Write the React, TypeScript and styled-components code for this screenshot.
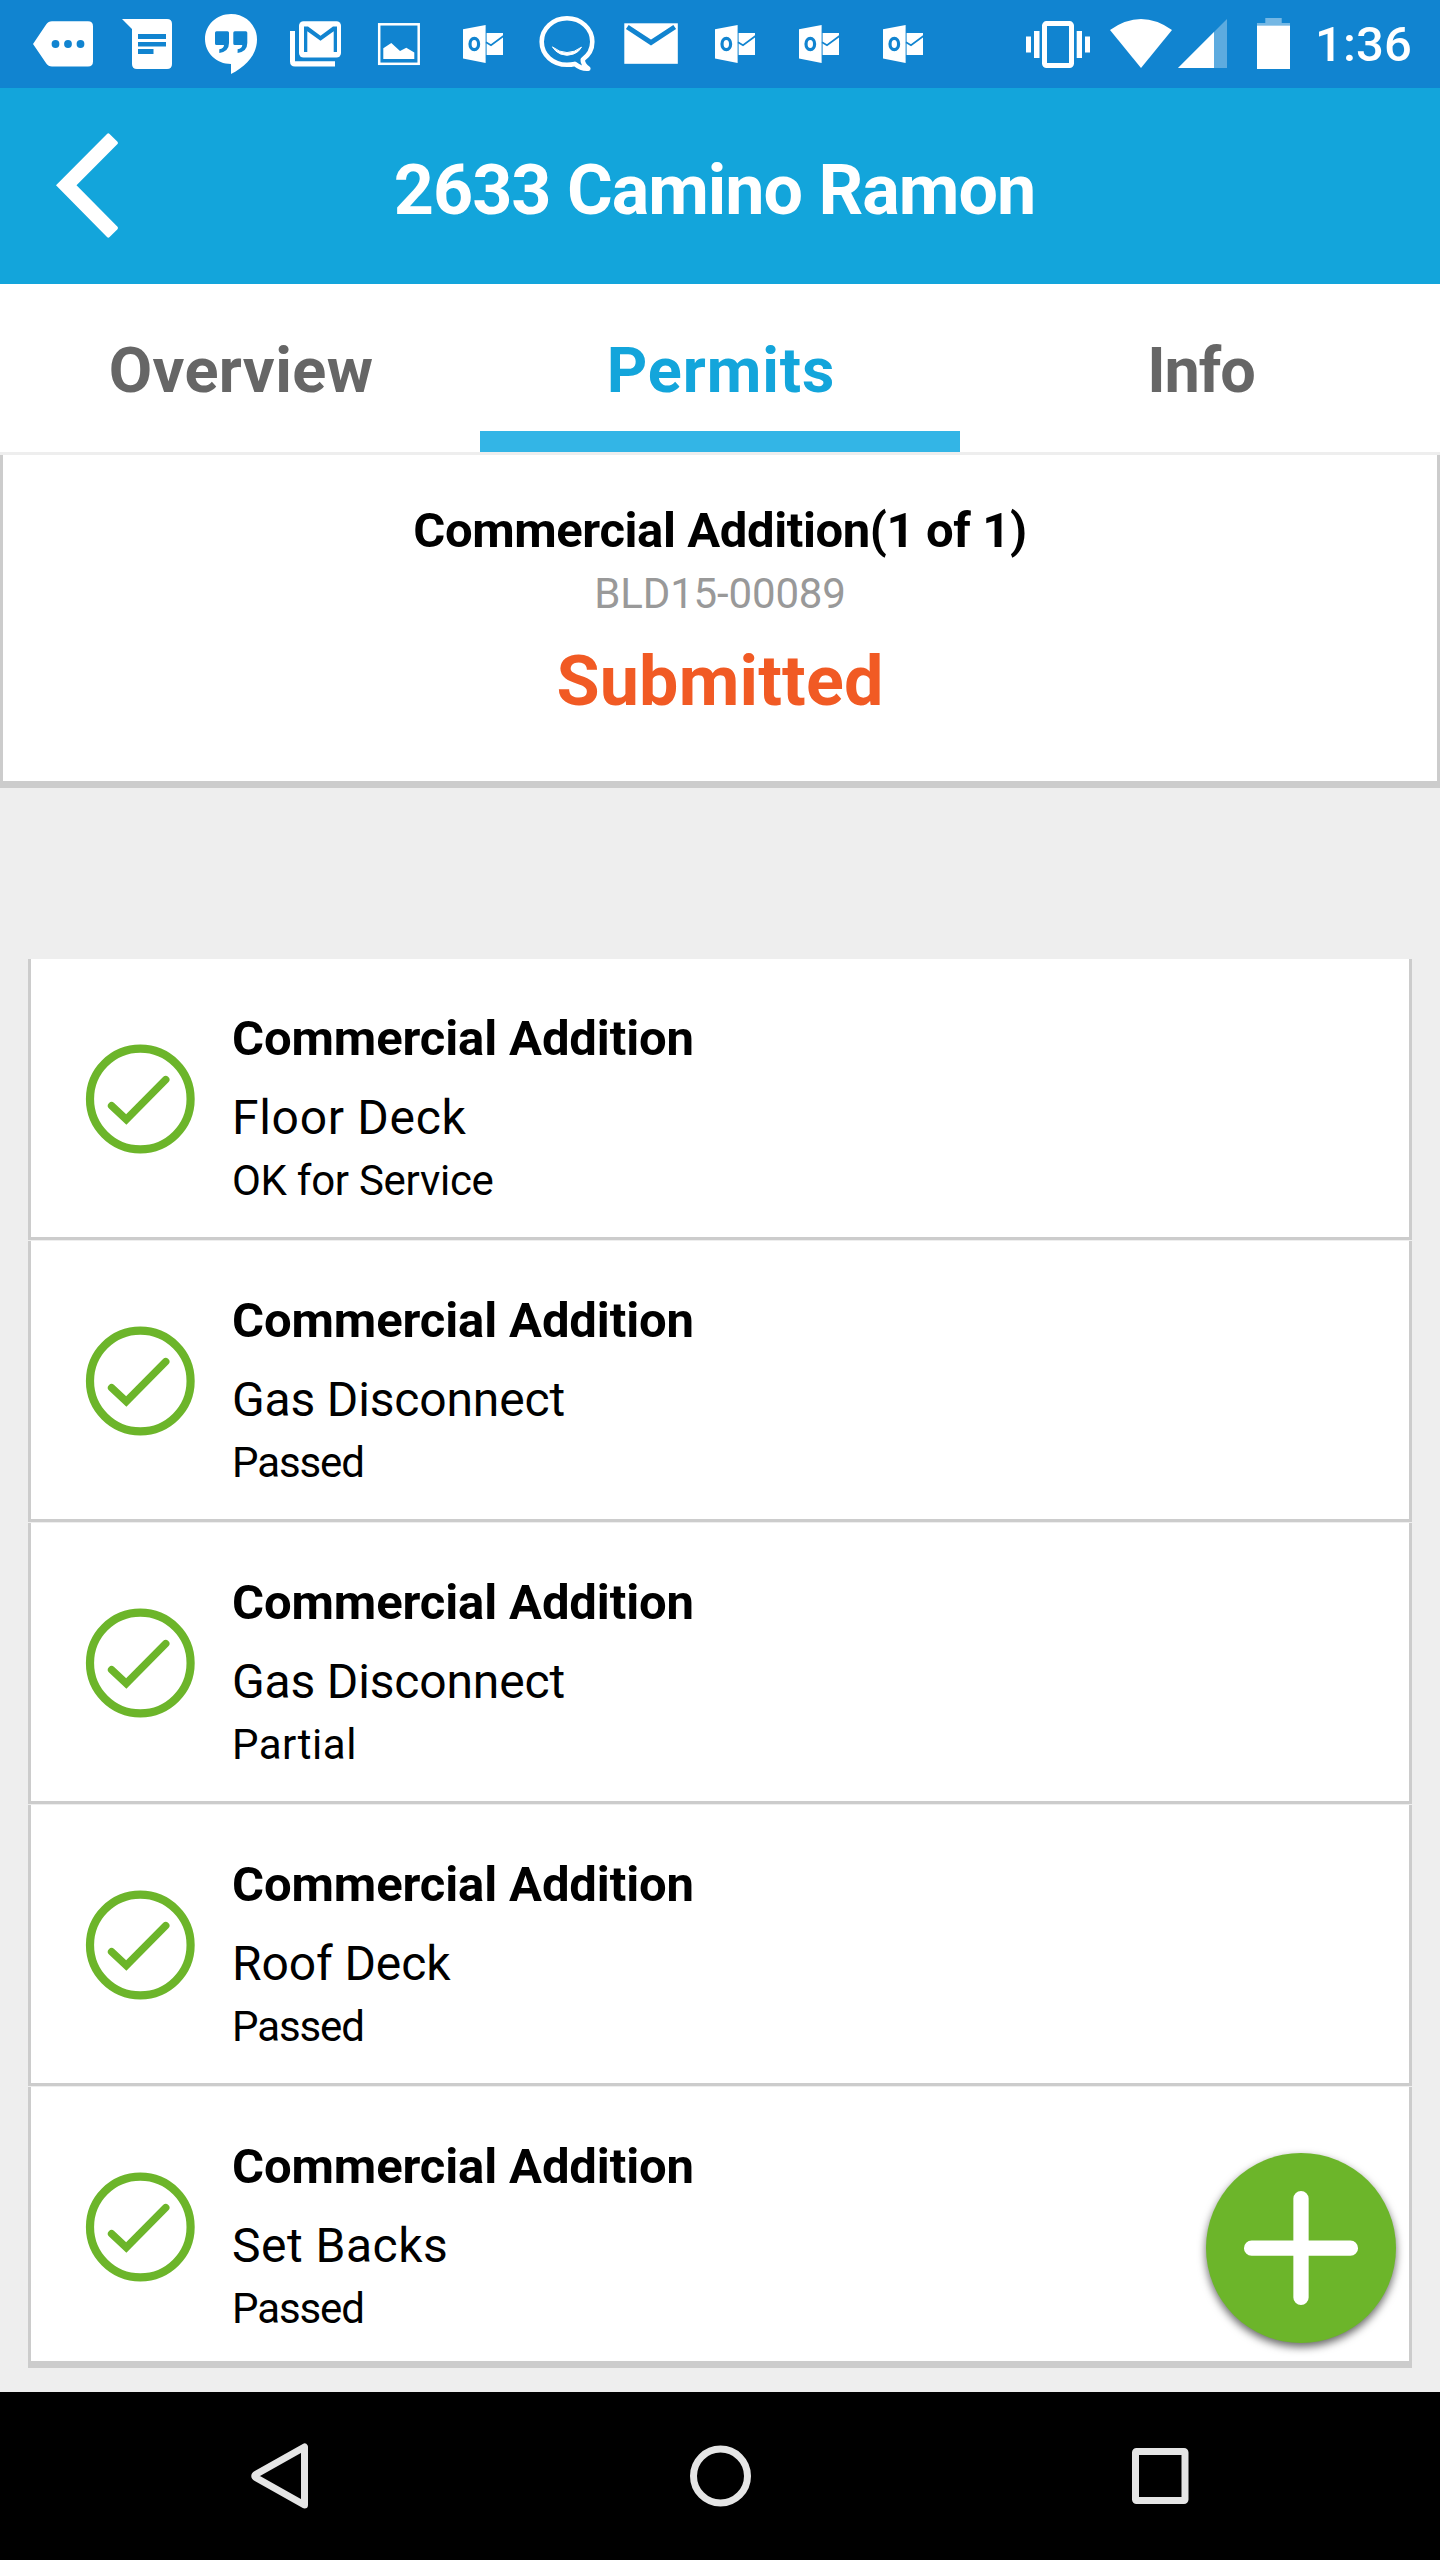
import React from 'react';
import styled, { createGlobalStyle } from 'styled-components';

const GlobalStyle = createGlobalStyle`
  * { box-sizing: border-box; }
  body { margin: 0; background: #eee; font-family: Roboto, "Liberation Sans", sans-serif; }
`;

const Screen = styled.div`
  width: 1440px;
  height: 2560px;
  display: flex;
  flex-direction: column;
  background: #eee;
  overflow: hidden;
`;

const StatusBar = styled.div`
  height: 88px;
  flex: none;
  display: flex;
  justify-content: space-between;
  padding: 0 25px 0 21px;
  background: #1184d0;
`;

const IconGroup = styled.div`
  display: flex;
  align-items: center;
`;

const StatusSvg = styled.svg`
  display: block;
  height: 88px;
  flex: none;
`;

const Clock = styled.span`
  margin-left: 4px;
  padding-top: 2px;
  width: 100px;
  color: #fff;
  font-size: 49px;
  font-weight: 500;
  line-height: 92px;
  letter-spacing: 0.13px;
  white-space: nowrap;
`;

const Header = styled.header`
  height: 196px;
  flex: none;
  display: grid;
  grid-template-columns: 174px 1fr 174px;
  align-items: center;
  background: #13a5db;
`;

const BackButton = styled.button`
  border: 0;
  padding: 0 0 0 56px;
  background: none;
  display: flex;
`;

const Title = styled.h1`
  margin: 0;
  padding: 7px 11px 0 0;
  color: #fff;
  font-size: 70px;
  font-weight: 700;
  line-height: 90px;
  letter-spacing: -1px;
  text-align: center;
  white-space: nowrap;
`;

const Tabs = styled.nav`
  height: 171px;
  flex: none;
  display: grid;
  grid-template-columns: repeat(3, 1fr);
  background: #fff;
  border-bottom: 3px solid #eee;
`;

const Tab = styled.div<{ $active?: boolean; $spacing: number }>`
  padding: 5px 0 0 2px;
  text-align: center;
  font-size: 63px;
  font-weight: 700;
  line-height: 163px;
  letter-spacing: ${p => p.$spacing}px;
  color: ${p => (p.$active ? '#13a5db' : '#666')};
  box-shadow: ${p => (p.$active ? 'inset 0 -21px 0 #33b5e6' : 'none')};
`;

const PermitCard = styled.section`
  height: 333px;
  flex: none;
  display: flex;
  flex-direction: column;
  align-items: center;
  padding-top: 46px;
  background: #fff;
  border: 3px solid #ccc;
  border-top: 0;
  border-bottom-width: 7px;
`;

const PermitName = styled.h2`
  margin: 0;
  color: #000;
  font-size: 49px;
  font-weight: 700;
  line-height: 60px;
  letter-spacing: -0.4px;
`;

const PermitNumber = styled.div`
  margin-top: 3px;
  color: #999;
  font-size: 42px;
  line-height: 60px;
  letter-spacing: -0.16px;
`;

const PermitStatus = styled.div`
  margin-top: 17px;
  color: #f15a24;
  font-size: 70px;
  font-weight: 700;
  line-height: 80px;
  letter-spacing: 0.19px;
`;

const List = styled.ul`
  list-style: none;
  margin: 171px 28px 24px;
  padding: 0;
  display: flex;
  flex-direction: column;
  gap: 1px;
`;

const Item = styled.li`
  height: 281px;
  display: flex;
  align-items: flex-start;
  padding-left: 54px;
  background: #fff;
  border: 3px solid #ccc;
  border-top: 0;

  &:last-child { border-bottom-width: 7px; }
`;

const CheckIcon = styled.svg`
  flex: none;
  margin-top: 85px;
`;

const ItemText = styled.div`
  padding: 51px 0 0 37px;
  color: #000;
  white-space: nowrap;
`;

const ItemTitle = styled.h3`
  margin: 0;
  font-size: 49px;
  font-weight: 700;
  line-height: 58px;
  letter-spacing: -0.12px;
`;

const ItemName = styled.div<{ $spacing: number }>`
  margin-top: 20px;
  font-size: 48px;
  line-height: 60px;
  letter-spacing: ${p => p.$spacing}px;
`;

const ItemResult = styled.div<{ $spacing: number }>`
  margin-top: 8px;
  font-size: 42px;
  line-height: 50px;
  letter-spacing: ${p => p.$spacing}px;
`;

const AddButton = styled.button`
  position: absolute;
  left: 1206px;
  top: 2153px;
  width: 190px;
  height: 190px;
  padding: 0;
  border: 0;
  border-radius: 50%;
  background: #6cb52a;
  box-shadow: 0 4px 9px rgba(0, 0, 0, 0.6);
`;

const NavBar = styled.footer`
  height: 168px;
  flex: none;
  display: flex;
  align-items: center;
  justify-content: center;
  gap: 340px;
  background: #000;
`;

const NavIcon = styled.svg`
  width: 100px;
  height: 168px;
  fill: none;
  stroke: #e5e5e5;
  stroke-width: 7;
  stroke-linejoin: round;
`;

const BLUE = '#1184d0';

const Outlook = () => (
  <>
    <path fill="#fff" d="M463 29.3 485.6 25V63L463 58.4Z" />
    <ellipse cx="474.3" cy="44" rx="4.3" ry="5.7" fill="none" stroke={BLUE} strokeWidth="3.2" />
    <path fill="#fff" d="M486.6 33H503V55H486.6Z" />
    <path d="M486 42.3 491 45.3 503.5 36" fill="none" stroke={BLUE} strokeWidth="1.7" />
  </>
);

const notifications: { x: number; art: React.ReactNode }[] = [
  {
    x: 21,
    art: (
      <>
        <path fill="#fff" d="M33 44 46.3 24.2Q48.3 21.2 52 21.2H88Q93 21.2 93 26.2V61.6Q93 66.6 88 66.6H52Q48.3 66.6 46.3 63.6Z" />
        <g fill={BLUE}>
          <circle cx="55.5" cy="44" r="3.9" />
          <circle cx="68" cy="44" r="3.9" />
          <circle cx="80.5" cy="44" r="3.9" />
        </g>
      </>
    ),
  },
  {
    x: 105,
    art: (
      <>
        <path fill="#fff" d="M122 19H167Q172 19 172 24V64Q172 69 167 69H137Q132 69 132 64V29Z" />
        <path fill={BLUE} d="M138 34H166V39H138ZM138 42H166V46.5H138ZM138 49H153.5V54H138Z" />
      </>
    ),
  },
  {
    x: 189,
    art: (
      <>
        <path fill="#fff" d="M231 14C216.5 14 205 25 205 39S216.5 64 231 64V74C247 66 257 54 257 39.5C257 25 245.5 14 231 14Z" />
        <path fill={BLUE} d="M216.5 31.3H227.5Q229 31.3 229 32.8V43Q229 51.5 219.3 53V49.3Q224 48.5 224 45H216.5Q215 45 215 43.5V32.8Q215 31.3 216.5 31.3Z" />
        <path fill={BLUE} d="M234.8 31.3H245.8Q247.3 31.3 247.3 32.8V43Q247.3 51.5 237.6 53V49.3Q242.3 48.5 242.3 45H234.8Q233.3 45 233.3 43.5V32.8Q233.3 31.3 234.8 31.3Z" />
      </>
    ),
  },
  {
    x: 273,
    art: (
      <>
        <path fill="#fff" d="M290 31H295V61.3H335V66.5H295Q290 66.5 290 61.5Z" />
        <rect x="299" y="21.2" width="42" height="36.3" rx="4.5" fill="#fff" />
        <path fill={BLUE} d="M304 52V26.5H308L320.5 35.7 333 26.5H337V52H333.7V31.3L320.5 40.8 307.3 31.3V52Z" />
      </>
    ),
  },
  {
    x: 357,
    art: (
      <>
        <rect x="379.2" y="24.3" width="39.5" height="39.5" fill="none" stroke="#fff" strokeWidth="2.5" />
        <path fill="#fff" d="M383.3 59V48.3L391.3 43 400 51 406.3 47.7 414.3 52.6V59Z" />
      </>
    ),
  },
  { x: 441, art: <Outlook /> },
  {
    x: 525,
    art: (
      <g fill="none" stroke="#fff" strokeLinejoin="round" strokeLinecap="round">
        <path
          strokeWidth="4.6"
          d="M582.8 59.5C588.7 55.3 592.3 49 592.3 41.8C592.3 28.7 581 18.3 567 18.3S541.7 28.7 541.7 41.8S553 64.8 567 64.8C569.8 64.8 572.4 64.5 574.8 63.9C579 67.3 583.5 69 588.3 68.6C584.8 66 582.5 62.5 582.8 59.5Z"
        />
        <path strokeWidth="1" fill="#fff" d="M552.7 47.2Q567 58 581.5 47.2Q579 52 573.5 54Q567 56.6 560.5 54Q555 51.5 552.7 47.2Z" />
      </g>
    ),
  },
  {
    x: 609,
    art: (
      <>
        <rect x="624.3" y="23.3" width="53.5" height="40.5" fill="#fff" />
        <path d="M627.3 27 651 42.6 674.7 27" fill="none" stroke={BLUE} strokeWidth="5" />
      </>
    ),
  },
  { x: 693, art: <g transform="translate(252 0)"><Outlook /></g> },
  { x: 777, art: <g transform="translate(336 0)"><Outlook /></g> },
  { x: 861, art: <g transform="translate(420 0)"><Outlook /></g> },
];

const indicators: { x: number; width: number; art: React.ReactNode }[] = [
  {
    x: 1020,
    width: 80,
    art: (
      <>
        <rect x="1044.5" y="23.6" width="27" height="42" rx="2" fill="none" stroke="#fff" strokeWidth="5" />
        <path fill="#fff" d="M1026 36.5H1031V52.5H1026ZM1034 31H1039.5V58H1034ZM1076.7 31H1082V58H1076.7ZM1085 36.5H1090V52.5H1085Z" />
      </>
    ),
  },
  { x: 1100, width: 75, art: <path fill="#fff" d="M1141 68 1110 30Q1141 8 1172 30Z" /> },
  {
    x: 1175,
    width: 60,
    art: (
      <>
        <path fill="#fff" fillOpacity="0.32" d="M1178 68H1227V19Z" />
        <path fill="#fff" d="M1178 68H1214V32Z" />
      </>
    ),
  },
  {
    x: 1235,
    width: 76,
    art: (
      <>
        <path fill="#fff" fillOpacity="0.42" d="M1265.3 18H1281.7V23H1290V25.5H1257V23H1265.3Z" />
        <path fill="#fff" d="M1257 25.5H1290V69H1257Z" />
      </>
    ),
  },
];

const inspections = [
  { name: 'Floor Deck', result: 'OK for Service', nameSpacing: 0.7, resultSpacing: -0.28 },
  { name: 'Gas Disconnect', result: 'Passed', nameSpacing: -0.16, resultSpacing: -1.1 },
  { name: 'Gas Disconnect', result: 'Partial', nameSpacing: -0.16, resultSpacing: 0.5 },
  { name: 'Roof Deck', result: 'Passed', nameSpacing: -0.1, resultSpacing: -1.1 },
  { name: 'Set Backs', result: 'Passed', nameSpacing: 0.5, resultSpacing: -1.1 },
];

export default function App() {
  return (
    <Screen>
      <GlobalStyle />
      <StatusBar>
        <IconGroup>
          {notifications.map(({ x, art }) => (
            <StatusSvg key={x} width="84" viewBox={`${x} 0 84 88`}>{art}</StatusSvg>
          ))}
        </IconGroup>
        <IconGroup>
          {indicators.map(({ x, width, art }) => (
            <StatusSvg key={x} width={width} viewBox={`${x} 0 ${width} 88`}>{art}</StatusSvg>
          ))}
          <Clock>1:36</Clock>
        </IconGroup>
      </StatusBar>

      <Header>
        <BackButton aria-label="Back">
          <svg width="62" height="106" viewBox="0 0 62 106">
            <path fill="#fff" d="M0 52.3 51 1Q52.3-.4 53.6 1L61.500 8.700Q62.400 10 61.500 11L20.500 52.300 61.500 93.800Q62.400 95 61.500 96.200L53.600 104Q52.300 105.400 51 104Z" />
          </svg>
        </BackButton>
        <Title>2633 Camino Ramon</Title>
      </Header>

      <Tabs>
        <Tab $spacing={0.4}>Overview</Tab>
        <Tab $active $spacing={0.9}>Permits</Tab>
        <Tab $spacing={-1.1}>Info</Tab>
      </Tabs>

      <PermitCard>
        <PermitName>Commercial Addition(1 of 1)</PermitName>
        <PermitNumber>BLD15-00089</PermitNumber>
        <PermitStatus>Submitted</PermitStatus>
      </PermitCard>

      <List>
        {inspections.map((item, i) => (
          <Item key={i}>
            <CheckIcon width="110" height="110" viewBox="0 0 110 110" fill="none" stroke="#6cb52a">
              <circle cx="55.3" cy="55" r="50.3" strokeWidth="8.2" />
              <path d="M26.6 61.7 41.3 75.5 80.7 35.7" strokeWidth="7.5" strokeLinecap="round" />
            </CheckIcon>
            <ItemText>
              <ItemTitle>Commercial Addition</ItemTitle>
              <ItemName $spacing={item.nameSpacing}>{item.name}</ItemName>
              <ItemResult $spacing={item.resultSpacing}>{item.result}</ItemResult>
            </ItemText>
          </Item>
        ))}
      </List>

      <AddButton aria-label="Add">
        <svg width="190" height="190" viewBox="0 0 190 190" stroke="#fff" strokeWidth="15.3" strokeLinecap="round">
          <path d="M45.6 95.2H144.4M95 45.6V144.4" />
        </svg>
      </AddButton>

      <NavBar>
        <NavIcon viewBox="230 2392 100 168"><path d="M304.5 2447V2505L256.500 2478Q253 2476 256.500 2474Z" /></NavIcon>
        <NavIcon viewBox="670 2392 100 168"><circle cx="720.5" cy="2476" r="27" /></NavIcon>
        <NavIcon viewBox="1110 2392 100 168"><rect x="1135.5" y="2451.5" width="49.5" height="49" rx="1" /></NavIcon>
      </NavBar>
    </Screen>
  );
}
